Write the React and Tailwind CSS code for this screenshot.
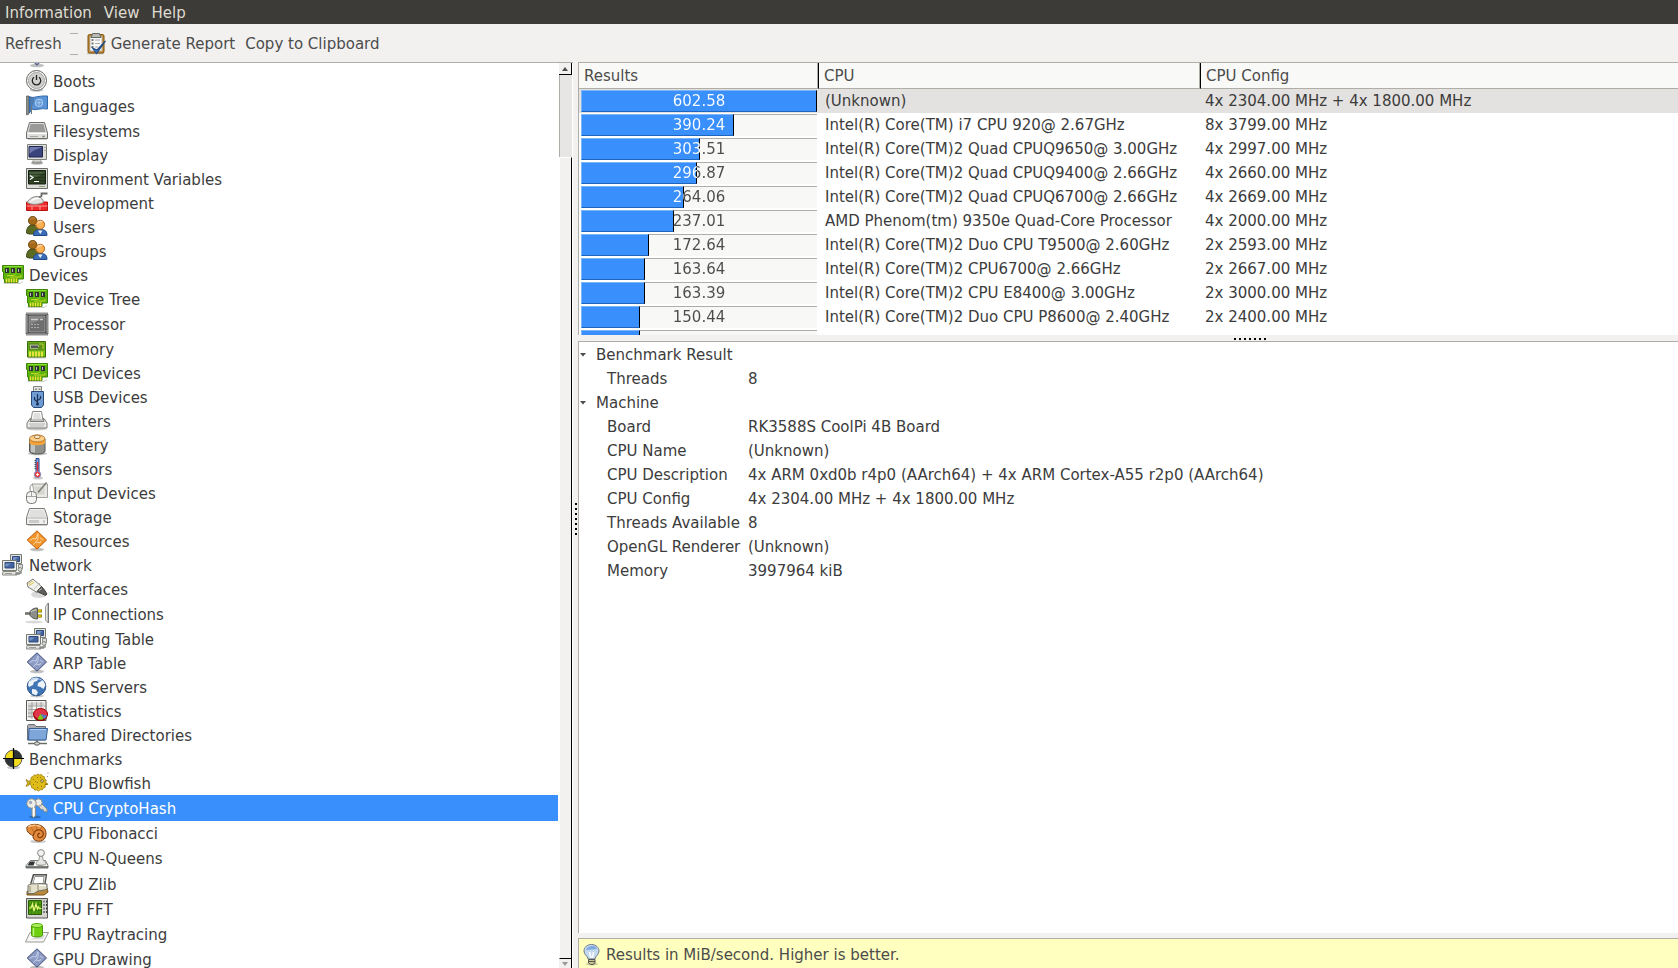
import React, { useState } from "react";

const Diamond = ({ fill, light, stroke }) => (
  <>
    <ellipse cx="12" cy="20.5" rx="7" ry="1.8" fill="#000" opacity=".25" />
    <path d="M12 1.8 21.5 11 12 20.2 2.2 11Z" fill={fill} stroke={stroke} />
    <path
      d="M4.5 11.5 8 9.5l3 .5 2-5.500M13 5v5l-2 3 4 1 .5-2M8 16l3-3M15 9l3 2"
      fill="none"
      stroke={light}
      strokeWidth=".9"
    />
  </>
);

const PciCard = () => (
  <>
    <path d="M2 20h17l3-2v1l-3 2H3Z" fill="#000" opacity=".2" />
    <path d="M1.5 2.5h21v13.5h-5.5v3.5H3.5V16H2.5V8.5h-1Z" fill="#5cb30b" stroke="#3f8406" />
    <path d="M3 3.5h18.5" stroke="#8ae234" />
    <path d="M4 5h4v5H4zM10 5h4v5h-4zM16 5h4v5h-4z" fill="#2e3436" />
    <path d="M5.5 6v3M11.5 6v3M17.5 6v3" stroke="#b8bdb2" />
    <path d="M6 12.5h7l2-2M9 14h11V12" fill="none" stroke="#c4d62a" />
    <path d="M5.5 15.5v4M8 15.5v4M10.5 15.5v4M13 15.5v4M15.5 15.5v4" stroke="#f4e13c" strokeWidth="1.4" />
  </>
);

const Computers = () => (
  <>
    <path d="M9.5 1.5h11v9h-11z" fill="#e4e4e0" stroke="#777973" />
    <path d="M11.5 3.500h7v5h-7z" fill="#4565a0" stroke="#2f4a7d" />
    <path d="M12 4h5l-3 3h-2z" fill="#7593c4" />
    <path d="M17.5 11.5h4v4h-4z" fill="#dcdcd8" stroke="#888a85" />
    <path d="M1.5 7.5h14v10h-14z" fill="#ededea" stroke="#777973" />
    <path d="M4 9.500h9v5.500H4z" fill="#4565a0" stroke="#2f4a7d" />
    <path d="M4.5 10.5h5l-3.5 3h-1.5z" fill="#7593c4" />
    <path d="M2 18.5h13l1 3.5H1.5z" fill="#e4e4e0" stroke="#888a85" />
    <path d="M4 20.5h7" stroke="#999b97" />
    <circle cx="19" cy="16.5" r="2" fill="#d3d7cf" stroke="#888a85" />
    <path d="M16 20h4v-2M14 21h5" fill="none" stroke="#888a85" strokeWidth="1.4" />
  </>
);

const People = () => (
  <>
    <path d="M1.5 18c0-5 2-8 6-8s6 2 6 7l-3 2H4Z" fill="#5b6b24" stroke="#3b4716" />
    <circle cx="7.7" cy="5.7" r="4.2" fill="#a5691a" stroke="#70430b" />
    <path d="M5.5 4.5c1-1.5 3-2 4-1" stroke="#d59a49" fill="none" />
    <path d="M8.500 20.500c0-4 2-6 7-6s6.500 2 6.500 6Z" fill="#3b6cb8" stroke="#204a87" />
    <path d="M13 15.500h4.500L15.300 19Z" fill="#eef2f8" />
    <circle cx="15.200" cy="9.700" r="4.400" fill="#fbaf56" stroke="#b8650c" />
    <path d="M12.500 8.500c1-2 3-2.500 4.500-1.500" stroke="#ffdcae" fill="none" strokeWidth="1.5" />
  </>
);

const icons = {
  modules: <Diamond fill="#8c9bc4" light="#c8d2ea" stroke="#3f4b7a" />,
  resources: <Diamond fill="#f0952c" light="#fcdcae" stroke="#c35a04" />,
  pci: <PciCard />,
  computers: <Computers />,
  people: <People />,
  power: (
    <>
      <ellipse cx="11.5" cy="21" rx="7" ry="1.8" fill="#000" opacity=".2" />
      <circle cx="11.5" cy="11.5" r="10" fill="#fafafa" stroke="#5f615d" />
      <circle cx="11.5" cy="11.5" r="8" fill="#d0d0ce" stroke="#a4a4a2" />
      <path d="M9 8.3a4.2 4.2 0 1 0 5 0M11.5 6v5" fill="none" stroke="#222" strokeWidth="1.3" />
    </>
  ),
  flag: (
    <>
      <path d="M1.5 2h2.5v18l-2.5 1z" fill="#8a8d88" stroke="#555753" strokeWidth=".7" />
      <path d="M4.5 2.5c4 2.5 7-1 18-.5v13c-7-1.5-11 2-16 0l-2 4z" fill="#5b94d6" stroke="#2f68ad" />
      <path d="M5 3v15l4-10V3.5z" fill="#3f6690" opacity=".5" />
      <circle cx="14" cy="8.8" r="3.5" fill="none" stroke="#a9cbf0" strokeWidth="1.2" />
      <path d="M11.5 8.8h5M14 6.5v4.5" stroke="#a9cbf0" />
      <path d="M6.5 12v8" stroke="#777" />
    </>
  ),
  drive: (
    <>
      <path d="M3 20h19v1H3z" fill="#000" opacity=".2" />
      <path d="M4.5 3.5h15l3 10.5v5.5h-21V14z" fill="#dededc" stroke="#6d6f6b" />
      <path d="M5.5 5h13l2 8H3.5z" fill="#9a9b99" />
      <path d="M2.5 14.5h19.5" stroke="#fff" />
      <path d="M5 17.5h8M17.5 17h2v1h-2z" stroke="#a5a6a3" />
    </>
  ),
  storage: (
    <>
      <path d="M3 20h19v1H3z" fill="#000" opacity=".2" />
      <path d="M4.5 3.5h15l3 9v7h-21v-7z" fill="#f0f0ee" stroke="#7b7d79" />
      <path d="M5.5 5h13l2 7H3.5z" fill="#e0e0de" />
      <path d="M2 13h20" stroke="#b0b1ae" />
      <path d="M5 15v3M7 15v3M9 15v3M11 15v3M13 15v3M19 15v3" stroke="#a4a5a2" />
    </>
  ),
  display: (
    <>
      <ellipse cx="12" cy="20" rx="6" ry="1.6" fill="#777" opacity=".7" />
      <path d="M9 16h6l1.5 3h-9z" fill="#d9d9d6" stroke="#888a85" strokeWidth=".7" />
      <path d="M2.5 1.5h19v15h-19z" fill="#dcdcd9" stroke="#80827d" />
      <path d="M4 3.5h13.5v10.5H4z" fill="#39437c" stroke="#20264f" />
      <path d="M4.5 4h12.5c-4 2-9 3-12.5 7z" fill="#6e78ac" />
      <path d="M20 4v1M20 7v1" stroke="#777" />
    </>
  ),
  terminal: (
    <>
      <path d="M1.5 1.5h21v20h-21z" fill="#dcdcd8" stroke="#6a6c67" />
      <path d="M3.5 3.5h17v13.5h-17z" fill="#2f4224" stroke="#161d12" />
      <path d="M4 5h16l-8 5-8 1z" fill="#5a7050" opacity=".6" />
      <path d="M4 7.5h16M4 10.5h16M4 13.5h16" stroke="#1d2a16" opacity=".6" />
      <path d="M5 8.5l3 2-3 2M9 14.5h5" fill="none" stroke="#fff" strokeWidth="1.2" />
      <path d="M14 19.5h6" stroke="#8fa57f" />
    </>
  ),
  trowel: (
    <>
      <path d="M1.5 11h21v8.5h-21z" fill="#ef2929" stroke="#b80f0f" />
      <path d="M1.5 15h21M7 15v4M15 15v4" stroke="#fbb" strokeWidth=".8" />
      <path d="M2 11.500c3-5 9-7.500 14-5l3 4.500c-4 2.500-12 3.500-17 .5z" fill="#e2e2e0" stroke="#888a85" />
      <path d="M5 11c3-3 6-4 10-3.5" fill="none" stroke="#fff" strokeWidth="1.3" />
      <path d="M14 6.5 16.5 5V2.5h6" fill="none" stroke="#6b6d69" strokeWidth="1.8" />
    </>
  ),
  processor: (
    <>
      <path d="M1.500 1.500h21v21h-21z" fill="none" stroke="#222" strokeWidth="2" strokeDasharray="1 1" />
      <path d="M2.500 2.500h19v19h-19z" fill="#333" />
      <path d="M4 4h16v16H4z" fill="#6e6f6e" stroke="#9a9b99" />
      <path d="M4.5 13 20 5v-.5H4.5z" fill="#8c8d8c" opacity=".7" />
      <path d="M6 7.5h7M15 7.5h3" stroke="#ccc" strokeWidth="1.6" />
      <path d="M6 12.5h8M6 15.5h8" stroke="#aaa" strokeDasharray="2 1" />
    </>
  ),
  memory: (
    <>
      <path d="M3 21h18" stroke="#000" opacity=".2" />
      <path d="M2.5 4.5h18v15.5h-18z" fill="#73c31c" stroke="#3a6b07" />
      <path d="M3.5 5.5h16v8h-16z" fill="#5d8f1e" />
      <path d="M5 9h9M6 7.5v4.5M8 7.5v4.5M10 7.5v4.5M12 7.5v4.5" stroke="#d8d8d4" strokeWidth="1.1" />
      <path d="M6 8.5h7v2.5H6z" fill="#555753" />
      <path d="M14 7h4v5" stroke="#c4d62a" fill="none" />
      <path d="M5 14.5v5M8 14.5v5M11 14.5v5M14 14.5v5M17 14.5v5" stroke="#f6e544" strokeWidth="1.8" />
    </>
  ),
  usb: (
    <>
      <path d="M8.5 1.5h8v6h-8z" fill="#e4e4e2" stroke="#83857f" />
      <path d="M10 3.5h2v1.5h-2zM13.5 3.5h2v1.5h-2z" fill="#888a85" />
      <path d="M6.5 6.5h12v13.5l-2 2.5h-8l-2-2.5z" fill="#6d9bd2" stroke="#27497a" />
      <path d="M12.500 9v11M12.500 17l-3-2.500V12M12.500 15.500l3-2V11" fill="none" stroke="#1c3052" strokeWidth="1.2" />
      <circle cx="12.5" cy="19" r="1.5" fill="#1c3052" />
    </>
  ),
  printer: (
    <>
      <ellipse cx="12" cy="20" rx="10" ry="1.5" fill="#000" opacity=".2" />
      <path d="M6 11 7.5 2.5h9L18 11z" fill="#fcfcfc" stroke="#888a85" />
      <path d="M9 4h6l1 6H8z" fill="#dfdfdd" />
      <path d="M5 9.500h1l-1 3h14l-1-3h1l3 4.500v5H2v-5z" fill="#ececea" stroke="#7b7d79" />
      <path d="M4 15h16M5 17h14" stroke="#b5b6b3" />
    </>
  ),
  battery: (
    <>
      <ellipse cx="12.5" cy="20.5" rx="9.5" ry="1.7" fill="#000" opacity=".25" />
      <path d="M4.5 6v12c0 4 15.5 4 15.5 0V6z" fill="#8f918d" stroke="#555753" />
      <path d="M7 10v9M9 10v9.5" stroke="#dcdddb" strokeWidth="1.3" />
      <path d="M4.5 6v4c0 3 15.5 3 15.5 0V6z" fill="#f4a33a" />
      <ellipse cx="12.2" cy="5.5" rx="7.7" ry="3.5" fill="#fcd08c" stroke="#b9772a" />
      <ellipse cx="12.2" cy="3.8" rx="3" ry="1.8" fill="#f7e9d0" stroke="#a7722f" />
    </>
  ),
  sensor: (
    <>
      <ellipse cx="13" cy="21" rx="5" ry="1.5" fill="#000" opacity=".2" />
      <path d="M11 1.5h3v14h-3z" fill="#7da0e0" stroke="#26438a" />
      <path d="M9.5 3.5h1.5M9.5 5.5h1.5M9.5 7.5h1.5M9.5 9.5h1.5M9.5 11.5h1.5" stroke="#333" strokeWidth=".8" />
      <path d="M12.5 5v12" stroke="#ef2929" strokeWidth="1.4" />
      <circle cx="12.5" cy="17.5" r="3.2" fill="#ef3b3b" stroke="#8290c4" />
      <path d="M11 17.5h3M12.5 16v3" stroke="#fff" strokeWidth=".9" />
    </>
  ),
  input: (
    <>
      <path d="M7.5 3h15v13.5H10z" fill="#e8e8e4" stroke="#a0a29d" />
      <path d="M9.5 5.5h10v8h-8z" fill="#d6d6ce" />
      <path d="M13 11.5 21.5 1.5" stroke="#7b7d79" strokeWidth="1.5" />
      <path d="M6 11C4 7 5 4 8 3" fill="none" stroke="#888a85" />
      <rect x="1.5" y="10.5" width="10" height="12" rx="4" fill="#f4f4f2" stroke="#777973" />
      <path d="M2 15.5h9M6.5 11v4.5" stroke="#a4a5a2" />
    </>
  ),
  cable: (
    <>
      <ellipse cx="14" cy="17.5" rx="8" ry="3.5" fill="#000" opacity=".15" />
      <path d="M2 6 8 2l9 8-5 5.5L3 10z" fill="#f0f0ec" stroke="#7b7d79" />
      <path d="M3 7l5-3M4 8.5l5-3" stroke="#dcc65a" />
      <path d="M9 12l6-6" stroke="#c0c1bd" />
      <path d="M12 14.5 16.5 9.5l3 3.5 2.5 4-1.5 1.5-4-2z" fill="#5c5e5a" stroke="#3c3e3b" />
      <path d="M14 13.5l3-2" stroke="#bbb" />
    </>
  ),
  plug: (
    <>
      <ellipse cx="9" cy="20" rx="9" ry="1.5" fill="#000" opacity=".15" />
      <path d="M0 11.5h6" stroke="#6c6e69" strokeWidth="2.500" />
      <path d="M5 9.5c2-2.5 4-3.5 7.500-3.500v11c-3.500 0-5.500-1-7.500-3.500z" fill="#8c8e89" stroke="#555753" />
      <path d="M6 10c2-1.5 3-2 5.500-2" stroke="#d3d7cf" fill="none" />
      <path d="M13 9h4M13 14h4" stroke="#7a6a00" strokeWidth="3" />
      <path d="M13 9h3.5M13 14h3.5" stroke="#edd400" strokeWidth="1.4" />
      <path d="M20.5 4.5 23 1v20l-2.5-3z" fill="#e8e8e6" stroke="#999b97" />
      <path d="M23.5 1v20" stroke="#777" />
    </>
  ),
  globe: (
    <>
      <ellipse cx="12" cy="21" rx="7" ry="1.5" fill="#000" opacity=".2" />
      <circle cx="11.5" cy="11.5" r="9.3" fill="#3f74b5" stroke="#2b5388" />
      <path d="M4 6c3-4 8-4 10-3l-2 3-3 1-1 3-4 2-1-2zM13 8l5-3 2.5 5-2 4-3-2-3-1zM7 14l4 .5 2 3-2 3-4-2z" fill="#eef3fa" />
      <path d="M5 6c4-3 9-3 13 0" fill="none" stroke="#a9c8ec" />
    </>
  ),
  stats: (
    <>
      <path d="M1.5 1.5h19.5v20h-19.5z" fill="#f6f6f4" stroke="#555753" />
      <path d="M3 3.5h16.5v3H3zM3 6.5h4v12.5H3z" fill="#d5d6d3" />
      <path d="M3 7h17M3 10.5h17M3 14h17M3 17.5h17M7 3v17M11.5 3v17M16 3v17" stroke="#9a9c97" strokeWidth=".9" />
      <ellipse cx="15.5" cy="16.5" rx="7" ry="5.5" fill="#8f0000" />
      <ellipse cx="15.5" cy="15" rx="7" ry="5.5" fill="#e0354a" stroke="#a40000" />
      <path d="M15.500 15 22 16.500c-.5 2-2 3-3 3.500z" fill="#4f81c7" />
      <path d="M15.500 15 18.500 20c-2 1-4.500.8-6 0z" fill="#73d216" />
    </>
  ),
  folder: (
    <>
      <path d="M2.5 17V2.5l1-1h6l1.500 2h9.500V17z" fill="#a9acb0" stroke="#6b6f75" />
      <path d="M4 5.5h18.500L21 17H3.5z" fill="#7ea6d8" stroke="#34609b" />
      <path d="M5 6.5h16" stroke="#b4cdec" />
      <path d="M3 20.5h19M12 17v3" stroke="#6b6d69" strokeWidth="1.4" />
      <ellipse cx="12" cy="20.5" rx="2.5" ry="1.7" fill="#d3d7cf" stroke="#555753" />
    </>
  ),
  target: (
    <>
      <ellipse cx="12.5" cy="20.5" rx="6.5" ry="1.7" fill="#000" opacity=".2" />
      <circle cx="12.5" cy="11.5" r="8.5" fill="#f2dc1c" stroke="#555" />
      <path d="M12.5 11.5V3a8.5 8.5 0 0 1 8.5 8.500zM12.5 11.5V20A8.5 8.5 0 0 1 4 11.5z" fill="#2e3436" />
      <path d="M2 11.5h21M12.5 1v21" stroke="#000" strokeWidth="1.2" />
    </>
  ),
  blowfish: (
    <>
      <path d="M1 8.500 5 11l-1 3-3 1.500 1.500-3.500z" fill="#d8b414" stroke="#8d7208" strokeWidth=".7" />
      <path
        d="M13 3l1.500 1 2-.5.8 1.600 2 .6.2 2 1.800 1.300-.6 2 1 1.800-1.500 1.500v2l-2 .8-1 1.800-2-.3-1.700 1.400-1.800-1.200-2 .4-1-1.800-2-.6-.2-2-1.700-1.300.7-2-.9-1.800 1.500-1.400.1-2 2-.7 1-1.700 2 .4z"
        fill="#dfbb18"
        stroke="#9a7d0a"
        strokeWidth=".8"
      />
      <path d="M8 8l1 1M12 6l1 1M8 13l1 1M12 11l1 1M12 16l1 1M16 15l1 1M10 10l1 1M15 6l1 1" stroke="#8f7406" />
      <circle cx="17" cy="10" r="1.3" fill="#fff" stroke="#5a4a00" strokeWidth=".8" />
      <path d="M20 13.5l3-.5" stroke="#8d7208" strokeWidth="1.5" />
      <path d="M23 1.5v1M22.5 5v1" stroke="#888" />
    </>
  ),
  keys: (
    <>
      <ellipse cx="10" cy="21" rx="6" ry="1.5" fill="#000" opacity=".25" />
      <path d="M12 8.5 15 6l7 7v3l-3-.5-1-2h-2z" fill="#d9dad7" stroke="#888a85" />
      <circle cx="13.5" cy="6.500" r="3.700" fill="#ecedea" stroke="#888a85" />
      <path d="M7 11h3.5v9l-2 1.5L7 20z" fill="#ecedea" stroke="#888a85" />
      <circle cx="6.5" cy="7.5" r="4.7" fill="#ecedea" stroke="#888a85" />
      <path d="M8.500 10v9" stroke="#fff" />
      <circle cx="5.5" cy="6.5" r="1.2" fill="#9db5d6" stroke="#888a85" strokeWidth=".7" />
    </>
  ),
  shell: (
    <>
      <ellipse cx="13" cy="20.5" rx="8" ry="1.6" fill="#000" opacity=".2" />
      <path d="M2 6c4-4 14-3.500 17.500 1.500 3 4.500 1.500 11.500-4 12.500-5 1-8-2-7.500-5.500C3.500 13 1 9.500 2 6z" fill="#e28a3c" stroke="#7f3f0c" />
      <path d="M3 6c3-2.500 10-2.500 13 0" fill="none" stroke="#fbc58a" strokeWidth="1.5" />
      <path d="M8.500 14.500c0-4 3-6 6-5.500s4.500 3 3.500 5.500-4 3-5 1 .5-3.500 2-3" fill="none" stroke="#7a3a08" strokeWidth="1.1" />
      <path d="M6 6l3.500 6M11 4.500l1 5M16.500 6 15 9" stroke="#b8621a" strokeWidth=".8" />
    </>
  ),
  pawn: (
    <>
      <path d="M5.5 14.5h15l2.5 5v2.5H1v-2.5z" fill="#fbfbfa" stroke="#777973" />
      <path d="M5 15.5h5l-1.500 4H2.5zM13 15.500h4l.5 4h-5z" fill="#2e3436" />
      <path d="M1 21h22" stroke="#555753" strokeWidth="1.5" />
      <path d="M14.500 10h3l.5 4c2 1 3 2.500 3 4s-10 1.500-10 0 1-3 3-4z" fill="#e6e7e4" stroke="#999b97" />
      <circle cx="16" cy="7" r="3.4" fill="#f2f2f0" stroke="#888a85" />
    </>
  ),
  clamp: (
    <>
      <path d="M2 19.5 22 16l1 4-4 3H2z" fill="#b98a3c" stroke="#7a551a" />
      <path d="M6.5 12 9 3.5h11.5L19 13" fill="none" stroke="#555753" strokeWidth="3" />
      <path d="M7 12 9.500 4H20l-1.500 9" fill="none" stroke="#d6d7d4" strokeWidth="1.2" />
      <path d="M3 13.500c4-3 8-1 11-2l8 .5v5.500l-9 1.500-4 2.500H3z" fill="#e4dfc8" stroke="#6b6d69" />
      <path d="M5 14v6M13 12.5v6" stroke="#8f8a72" />
      <path d="M14 13.5h7" stroke="#fff" />
    </>
  ),
  scope: (
    <>
      <path d="M1.5 1.5h21v19.500h-21z" fill="#d3d4d0" stroke="#555753" />
      <path d="M3.5 3.5h13v14h-13z" fill="#4b9a10" stroke="#2c5d06" />
      <path d="M6.5 4v13M10 4v13M13.5 4v13M4 7.5h12M4 13.5h12" stroke="#3a7a0b" strokeWidth=".7" />
      <path d="M4 11h2l1.500-4 1.500 7 2-7 1.500 5 1-2 1 1.500h2" fill="none" stroke="#e6f77a" strokeWidth="1.2" />
      <path d="M18.500 4.500h1M21 4.500h1M18.500 8h1M21 8h1M18.500 11.500h1M21 11.500h1M18.500 15h1M21 15h1" stroke="#2e3436" strokeWidth="2" />
    </>
  ),
  cylinder: (
    <>
      <path d="M5 10.5h18.500l-5 9.500H.5z" fill="#f7f7f6" stroke="#999b97" />
      <path d="M6 17.5l12-.5 2-4h-6z" fill="#000" opacity=".12" />
      <path d="M6.5 3.5v9.500c0 2.500 11 2.500 11 0V3.500z" fill="#6fd00f" stroke="#4e9a06" />
      <path d="M8.5 6v8" stroke="#b9f27c" strokeWidth="1.5" />
      <ellipse cx="12" cy="3.5" rx="5.5" ry="2" fill="#a9ef5c" stroke="#5aae0a" />
    </>
  ),
  report: (
    <>
      <path d="M1 21.5h17" stroke="#000" opacity=".2" strokeWidth="1.5" />
      <rect x="2" y="2.5" width="16" height="18.5" rx="1.5" fill="#c58a2c" stroke="#7d500c" />
      <path d="M4 4.5h12V19H4z" fill="#f8f8f7" stroke="#aaa" strokeWidth=".8" />
      <path d="M6.5 1.5h7l1.500 4H5z" fill="#b8bab5" stroke="#666862" />
      <path d="M5.5 8h2M5.5 11.5h2M5.5 15h2" stroke="#777" strokeWidth="1.8" />
      <path d="M9 8h5M9 11.5h5M9 15h3" stroke="#aaa" />
      <path d="M6.500 16 10.500 21.500 19.500 9 11 18z" fill="#4a7dc2" stroke="#204a87" strokeWidth="1.1" />
    </>
  ),
  bulb: (
    <>
      <ellipse cx="10" cy="21" rx="6" ry="1.5" fill="#000" opacity=".2" />
      <path d="M9.500 1.500c-4.500 0-7.500 3-7.500 6.500 0 4 3.500 4.500 4 8h7c.5-3.500 4-4 4-8 0-3.500-3-6.500-7.500-6.500z" fill="#c2d8ee" stroke="#6f7c8a" />
      <path d="M4 7c1-3 3.500-4 6.500-4s4 1.500 4.500 3z" fill="#7fa8de" />
      <path d="M7.5 9l1.500 6M11.5 9 10.500 15" stroke="#fff" strokeWidth="1.5" />
      <path d="M6.500 16.500h6.500v3.500l-2 1.500h-2.500l-2-1.500z" fill="#c9c08e" stroke="#555753" />
      <path d="M6.5 18.5h6.500" stroke="#555753" />
    </>
  ),
};

const Icon = ({ name }) => (
  <svg viewBox="0 0 24 24" className="size-6 shrink-0" aria-hidden="true">
    {icons[name]}
  </svg>
);

const tree = [
  {
    items: [
      { label: "Kernel Modules", icon: "modules", iconOnly: true },
      { label: "Boots", icon: "power" },
      { label: "Languages", icon: "flag", tall: true },
      { label: "Filesystems", icon: "drive" },
      { label: "Display", icon: "display" },
      { label: "Environment Variables", icon: "terminal" },
      { label: "Development", icon: "trowel" },
      { label: "Users", icon: "people" },
      { label: "Groups", icon: "people" },
    ],
  },
  {
    label: "Devices",
    icon: "pci",
    items: [
      { label: "Device Tree", icon: "pci" },
      { label: "Processor", icon: "processor", tall: true },
      { label: "Memory", icon: "memory" },
      { label: "PCI Devices", icon: "pci" },
      { label: "USB Devices", icon: "usb" },
      { label: "Printers", icon: "printer" },
      { label: "Battery", icon: "battery" },
      { label: "Sensors", icon: "sensor" },
      { label: "Input Devices", icon: "input" },
      { label: "Storage", icon: "storage" },
      { label: "Resources", icon: "resources" },
    ],
  },
  {
    label: "Network",
    icon: "computers",
    items: [
      { label: "Interfaces", icon: "cable" },
      { label: "IP Connections", icon: "plug", tall: true },
      { label: "Routing Table", icon: "computers" },
      { label: "ARP Table", icon: "modules" },
      { label: "DNS Servers", icon: "globe" },
      { label: "Statistics", icon: "stats" },
      { label: "Shared Directories", icon: "folder" },
    ],
  },
  {
    label: "Benchmarks",
    icon: "target",
    items: [
      { label: "CPU Blowfish", icon: "blowfish" },
      { label: "CPU CryptoHash", icon: "keys", tall: true },
      { label: "CPU Fibonacci", icon: "shell" },
      { label: "CPU N-Queens", icon: "pawn", tall: true },
      { label: "CPU Zlib", icon: "clamp", tall: true },
      { label: "FPU FFT", icon: "scope" },
      { label: "FPU Raytracing", icon: "cylinder", tall: true },
      { label: "GPU Drawing", icon: "modules" },
    ],
  },
];

const results = [
  { score: "602.58", cpu: "(Unknown)", config: "4x 2304.00 MHz + 4x 1800.00 MHz" },
  { score: "390.24", cpu: "Intel(R) Core(TM) i7 CPU 920@ 2.67GHz", config: "8x 3799.00 MHz" },
  { score: "303.51", cpu: "Intel(R) Core(TM)2 Quad CPUQ9650@ 3.00GHz", config: "4x 2997.00 MHz" },
  { score: "296.87", cpu: "Intel(R) Core(TM)2 Quad CPUQ9400@ 2.66GHz", config: "4x 2660.00 MHz" },
  { score: "264.06", cpu: "Intel(R) Core(TM)2 Quad CPUQ6700@ 2.66GHz", config: "4x 2669.00 MHz" },
  { score: "237.01", cpu: "AMD Phenom(tm) 9350e Quad-Core Processor", config: "4x 2000.00 MHz" },
  { score: "172.64", cpu: "Intel(R) Core(TM)2 Duo CPU T9500@ 2.60GHz", config: "2x 2593.00 MHz" },
  { score: "163.64", cpu: "Intel(R) Core(TM)2 CPU6700@ 2.66GHz", config: "2x 2667.00 MHz" },
  { score: "163.39", cpu: "Intel(R) Core(TM)2 CPU E8400@ 3.00GHz", config: "2x 3000.00 MHz" },
  { score: "150.44", cpu: "Intel(R) Core(TM)2 Duo CPU P8600@ 2.40GHz", config: "2x 2400.00 MHz" },
];

const details = [
  { title: "Benchmark Result", rows: [["Threads", "8"]] },
  {
    title: "Machine",
    rows: [
      ["Board", "RK3588S CoolPi 4B Board"],
      ["CPU Name", "(Unknown)"],
      ["CPU Description", "4x ARM 0xd0b r4p0 (AArch64) + 4x ARM Cortex-A55 r2p0 (AArch64)"],
      ["CPU Config", "4x 2304.00 MHz + 4x 1800.00 MHz"],
      ["Threads Available", "8"],
      ["OpenGL Renderer", "(Unknown)"],
      ["Memory", "3997964 kiB"],
    ],
  },
];

const best = Number(results[0].score);

const TreeRow = ({ item, nested, selected, onSelect }) => (
  <button
    type="button"
    aria-label={item.label}
    onClick={() => onSelect(item.label)}
    className={`flex w-full items-center gap-1 text-left whitespace-nowrap ${item.tall ? "h-[26px]" : "h-6"} ${nested ? "pl-[25px]" : "pl-px"} ${selected ? "bg-[#398ffc] text-white" : ""}`}
  >
    <Icon name={item.icon} />
    {!item.iconOnly && <span className="pt-0.5">{item.label}</span>}
  </button>
);

const ScoreBar = ({ score }) => {
  const pct = (Number(score) / best) * 100;
  return (
    <div className="relative h-[22px] border-t border-[#b0aca6] bg-[#f8f8f6]">
      <div
        className="absolute -top-px left-0 h-[22px] border border-t-[#7db5fb] border-r-black border-b-[#1f64bd] border-l-[#7db5fb] bg-[#398ffc]"
        style={{ width: `${pct}%` }}
      />
      <span
        className="relative block bg-clip-text text-center leading-5 text-transparent"
        style={{ backgroundImage: `linear-gradient(to right, #fff ${pct}%, #4c4c4c ${pct}%)` }}
      >
        {score}
      </span>
    </div>
  );
};

const Grip = ({ vertical }) => (
  <div className={`flex gap-[3px] ${vertical ? "flex-col" : ""}`}>
    {[0, 1, 2, 3, 4, 5, 6].map((i) => (
      <span key={i} className="size-[2px] bg-black" />
    ))}
  </div>
);

const Scrollbar = () => (
  <div className="flex w-[14px] shrink-0 flex-col border-r border-white bg-[#e8e6e4]">
    <button
      type="button"
      aria-label="Scroll up"
      className="flex h-3 shrink-0 items-center justify-center border-r border-b border-black bg-[#f2f1f0]"
    >
      <svg viewBox="0 0 6 4" className="h-1 w-[6px]">
        <path d="M0 4 3 0l3 4z" fill="#4c4c4c" />
      </svg>
    </button>
    <div className="h-[82px] shrink-0 border-l border-[#b0aca6]" />
    <div className="min-h-0 flex-1 border border-t-white border-r-black border-b-black border-l-white bg-[#f2f1f0]" />
    <button
      type="button"
      aria-label="Scroll down"
      className="flex h-[9px] shrink-0 items-center justify-center border-r border-black bg-[#f2f1f0]"
    >
      <svg viewBox="0 0 6 4" className="h-1 w-[6px]">
        <path d="M0 0h6L3 4z" fill="#999" />
      </svg>
    </button>
  </div>
);

export default function App() {
  const [selected, setSelected] = useState("CPU CryptoHash");

  return (
    <div className="flex h-screen flex-col overflow-hidden bg-[#f2f1f0] font-['DejaVu_Sans',sans-serif] text-[15px] leading-6 text-[#3c3c3c]">
      <nav className="flex h-6 shrink-0 items-center gap-3 bg-[#3c3b37] pt-0.5 pl-[5px] text-[#dfdbd2]">
        <button type="button">Information</button>
        <button type="button">View</button>
        <button type="button">Help</button>
      </nav>

      <div className="flex h-[38px] shrink-0 items-center pt-0.5 pl-[5px] text-[#4c4c4c]">
        <button type="button">Refresh</button>
        <span className="ml-2 h-[22px] w-2 border-y border-[#b0aca6]" />
        <button type="button" className="ml-2 flex items-center gap-px">
          <Icon name="report" />
          Generate Report
        </button>
        <button type="button" className="ml-2.5">
          Copy to Clipboard
        </button>
      </div>

      <div className="flex min-h-0 flex-1">
        {/* Module tree */}
        <aside className="flex w-[573px] shrink-0 border-t border-[#b0aca6]">
          <div className="min-w-0 flex-1 overflow-hidden border-r border-white bg-white">
            <ul className="-mt-[18px]">
              {tree.map((group, idx) => (
                <li key={idx}>
                  {group.label && (
                    <TreeRow
                      item={group}
                      selected={selected === group.label}
                      onSelect={setSelected}
                    />
                  )}
                  <ul>
                    {group.items.map((item) => (
                      <li key={item.label}>
                        <TreeRow
                          item={item}
                          nested
                          selected={selected === item.label}
                          onSelect={setSelected}
                        />
                      </li>
                    ))}
                  </ul>
                </li>
              ))}
            </ul>
          </div>
          <Scrollbar />
        </aside>

        <div className="flex w-[5px] shrink-0 items-center justify-center pt-2">
          <Grip vertical />
        </div>

        <main className="flex min-w-0 flex-1 flex-col">
          {/* Results list */}
          <section className="h-[273px] shrink-0 overflow-hidden border-t border-l border-[#b0aca6] bg-white">
            <table className="w-full table-fixed border-separate border-spacing-0 text-left whitespace-nowrap">
              <colgroup>
                <col className="w-[240px]" />
                <col className="w-[382px]" />
                <col />
              </colgroup>
              <thead className="bg-[#f9f9f7] text-[#4c4c4c]">
                <tr className="h-[26px]">
                  <th className="border-r border-b border-r-black border-b-[#b0aca6] p-0 pt-px pl-[5px] font-normal shadow-[inset_-1px_0_#b0aca6]">
                    Results
                  </th>
                  <th className="border-r border-b border-r-black border-b-[#b0aca6] p-0 pt-px pl-[5px] font-normal shadow-[inset_-1px_0_#b0aca6]">
                    CPU
                  </th>
                  <th className="border-b border-[#b0aca6] p-0 pt-px pl-[5px] font-normal">
                    CPU Config
                  </th>
                </tr>
              </thead>
              <tbody>
                {results.map((row, idx) => (
                  <tr key={row.score} className={`h-6 ${idx === 0 ? "bg-[#e4e2e0]" : ""}`}>
                    <td className="p-0 pr-[2px] pl-[2px]">
                      <ScoreBar score={row.score} />
                    </td>
                    <td className="p-0 pl-[6px]">{row.cpu}</td>
                    <td className="p-0 pl-1">{row.config}</td>
                  </tr>
                ))}
                <tr className="h-6">
                  <td className="p-0 px-[2px]">
                    <div className="h-[22px] border-t border-[#b0aca6] bg-[#f8f8f6]">
                      <div className="-mt-px h-[22px] w-1/4 border border-t-[#7db5fb] border-r-black border-l-[#7db5fb] bg-[#398ffc]" />
                    </div>
                  </td>
                  <td />
                  <td />
                </tr>
              </tbody>
            </table>
          </section>

          <div className="flex h-[6px] shrink-0 items-end justify-center pb-px pl-[243px]">
            <Grip />
          </div>

          {/* Details */}
          <section className="min-h-0 flex-1 overflow-hidden border-t border-l border-[#b0aca6] bg-white pt-px">
            <table className="w-full table-fixed border-collapse text-left whitespace-nowrap">
              <colgroup>
                <col className="w-[169px]" />
                <col />
              </colgroup>
              {details.map((group) => (
                <tbody key={group.title}>
                  <tr className="h-6">
                    <th colSpan={2} className="p-0 font-normal">
                      <button type="button" className="flex items-center gap-[10px] pl-px">
                        <svg viewBox="0 0 6 4" className="h-1 w-[6px]">
                          <path d="M0 0h6L3 3.5z" fill="#4c4c4c" />
                        </svg>
                        {group.title}
                      </button>
                    </th>
                  </tr>
                  {group.rows.map(([name, value]) => (
                    <tr key={name} className="h-6">
                      <th className="p-0 pl-7 font-normal">{name}</th>
                      <td className="p-0">{value}</td>
                    </tr>
                  ))}
                </tbody>
              ))}
            </table>
          </section>

          <footer className="mt-[5px] flex h-[30px] shrink-0 items-center border-t border-l border-[#b0aca6] bg-[#ffffc0] pt-0.5 pl-[3px] text-[#4c4c4c]">
            <Icon name="bulb" />
            Results in MiB/second. Higher is better.
          </footer>
        </main>
      </div>
    </div>
  );
}
